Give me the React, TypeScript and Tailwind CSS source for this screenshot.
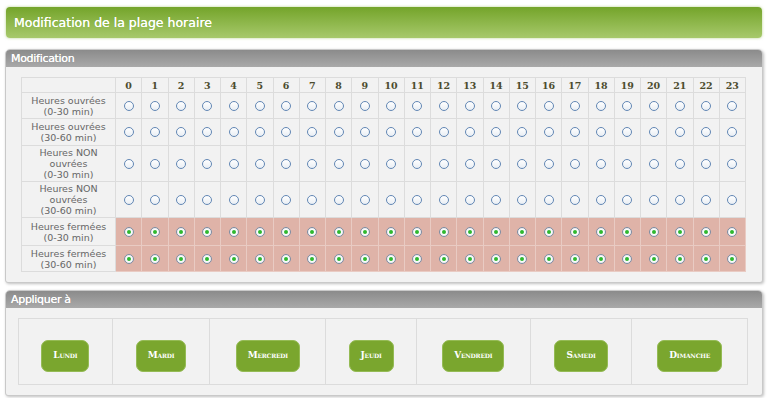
import React from "react";

const hours = Array.from({ length: 24 }, (_, i) => i);

const rows = [
  { label: ["Heures ouvrées", "(0-30 min)"], h: "h-[26px]", closed: false },
  { label: ["Heures ouvrées", "(30-60 min)"], h: "h-[27px]", closed: false },
  { label: ["Heures NON", "ouvrées", "(0-30 min)"], h: "h-[36px]", closed: false },
  { label: ["Heures NON", "ouvrées", "(30-60 min)"], h: "h-[36px]", closed: false },
  { label: ["Heures fermées", "(0-30 min)"], h: "h-[28px]", closed: true },
  { label: ["Heures fermées", "(30-60 min)"], h: "h-[26px]", closed: true },
];

const days = [
  { name: "Lundi", col: "w-[93px]" },
  { name: "Mardi", col: "w-[98px]" },
  { name: "Mercredi", col: "w-[116px]" },
  { name: "Jeudi", col: "w-[91px]" },
  { name: "Vendredi", col: "w-[114px]" },
  { name: "Samedi", col: "w-[102px]" },
  { name: "Dimanche", col: "w-[116px]" },
];

function Radio({ checked }: { checked: boolean }) {
  if (checked) {
    return (
      <span className="mx-auto flex h-[10px] w-[10px] items-center justify-center rounded-full border border-[#7c8aa0] bg-[radial-gradient(circle,#ffffff_40%,#d6dbe2_100%)]">
        <span className="h-[4px] w-[4px] rounded-full bg-[#2fb82f]" />
      </span>
    );
  }
  return (
    <span className="mx-auto block h-[10px] w-[10px] rounded-full border border-[#6287b4] bg-[linear-gradient(#ffffff,#e9eef4)]" />
  );
}

function Panel({ title, children, className }: { title: string; children: React.ReactNode; className?: string }) {
  return (
    <section
      className={`mx-[5px] overflow-hidden rounded-t-[5px] rounded-b-[3px] border border-[#c9c9c9] bg-[#f2f2f2] shadow-[1px_1px_3px_rgba(0,0,0,0.25)] ${className ?? ""}`}
    >
      <h2 className="h-[17px] bg-[linear-gradient(#8b8b8b,#a9a9a9)] pl-[5px] text-[11px] leading-[17px] font-normal tracking-[-0.3px] text-white [text-shadow:0_0_0.4px_#fff]">
        {title}
      </h2>
      {children}
    </section>
  );
}

export default function App() {
  return (
    <div className="h-[398px] w-[768px] overflow-hidden bg-white pt-[7px] font-['DejaVu_Sans',sans-serif]">
      <header className="mx-[6px] h-[31px] rounded-[4px] bg-[linear-gradient(#74a42a,#a7c96b)] pl-[8px] text-[12.5px] leading-[31px] text-white [text-shadow:0_0_0.5px_#fff] shadow-[0_0_3px_rgba(140,180,70,0.6)]">
        Modification de la plage horaire
      </header>

      <Panel title="Modification" className="mt-[11px]">
        <div className="px-[15px] pt-[10px] pb-[10px]">
          <table className="w-[725px] table-fixed border-collapse">
            <colgroup>
              <col className="w-[94px]" />
              {hours.map((h) => (
                <col key={h} />
              ))}
            </colgroup>
            <thead>
              <tr className="h-[15px]">
                <th className="border border-[#dcdcdc]" />
                {hours.map((h) => (
                  <th
                    key={h}
                    className="border border-[#dcdcdc] p-0 text-center font-['DejaVu_Serif',serif] text-[9.5px] leading-[13px] font-bold text-[#4c4c2e]"
                  >
                    {h}
                  </th>
                ))}
              </tr>
            </thead>
            <tbody>
              {rows.map((r, i) => (
                <tr key={i} className={r.h}>
                  <td className="border border-[#dcdcdc] p-0 text-center text-[9.5px] leading-[11px] text-[#666]">
                    {r.label.map((l) => (
                      <div key={l}>{l}</div>
                    ))}
                  </td>
                  {hours.map((h) => (
                    <td
                      key={h}
                      className={`border p-0 ${r.closed ? "border-[#e9cbc3] bg-[#dfb3a8]" : "border-[#dcdcdc]"}`}
                    >
                      <Radio checked={r.closed} />
                    </td>
                  ))}
                </tr>
              ))}
            </tbody>
          </table>
        </div>
      </Panel>

      <Panel title="Appliquer à" className="mt-[7px]">
        <div className="px-[12px] pt-[10px] pb-[10px]">
          <div className="flex h-[67px] w-[730px] border border-[#dcdcdc]">
            {days.map((d, i) => (
              <div
                key={d.name}
                className={`flex ${d.col} items-center justify-center ${i > 0 ? "border-l border-[#dcdcdc]" : ""}`}
              >
                <button className="mt-[8px] h-[32px] rounded-[7px] border border-[#95bb55] bg-[#7aa62e] px-[11px] font-['DejaVu_Serif',serif] text-[9px] font-bold text-white [font-variant:small-caps] tracking-[-0.2px]">
                  {d.name}
                </button>
              </div>
            ))}
          </div>
        </div>
      </Panel>
    </div>
  );
}
